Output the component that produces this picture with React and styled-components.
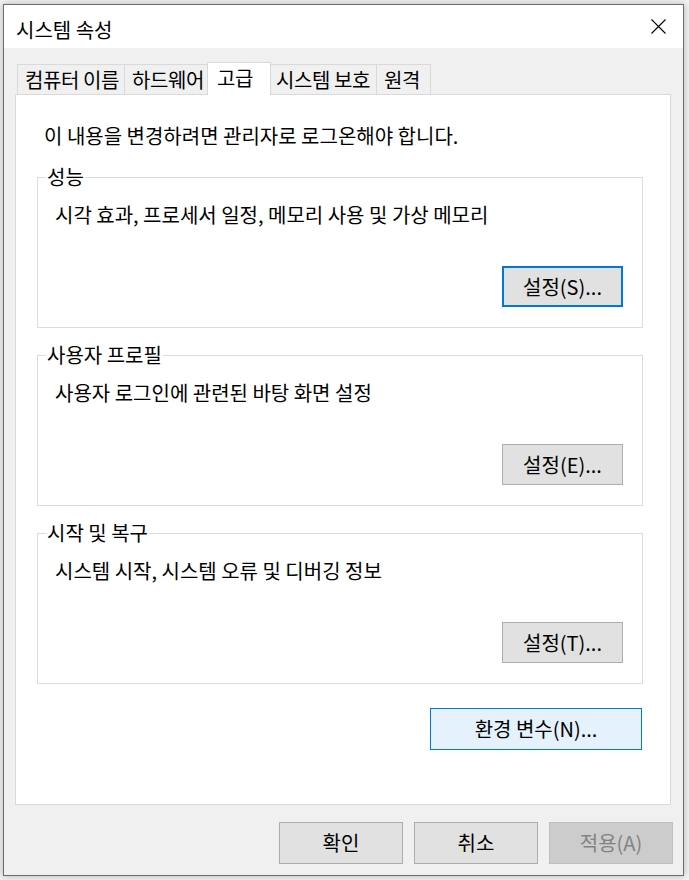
import React from "react";
import styled, { createGlobalStyle, css } from "styled-components";

const GlobalStyle = createGlobalStyle`
  html, body {
    margin: 0;
    padding: 0;
    background: #f3f3f3;
  }
  body {
    font-family: "Noto Sans CJK KR", "Noto Sans", sans-serif;
    color: #000;
  }
`;

const Page = styled.div`
  padding: 4px 0 0 3px;
  width: 689px;
  height: 880px;
  box-sizing: border-box;
  overflow: hidden;
`;

const Window = styled.div`
  width: 681px;
  height: 872px;
  box-sizing: border-box;
  border: 1px solid #6c6c6c;
  background: #f0f0f0;
  display: flex;
  flex-direction: column;
  box-shadow: 0 0 7px rgba(0, 0, 0, 0.28);
`;

const TitleBar = styled.div`
  height: 43px;
  background: #fff;
  display: flex;
  align-items: center;
  padding-left: 12px;
`;

const Title = styled.div`
  flex: 1;
  font-size: 20px;
  line-height: 24px;
  padding-top: 6px;
`;

const CloseButton = styled.div`
  width: 49px;
  height: 43px;
  display: flex;
  align-items: center;
  justify-content: center;
`;

const Body = styled.div`
  flex: 1;
  display: flex;
  flex-direction: column;
  padding: 14px 12px 0 11px;
`;

const TabRow = styled.div`
  display: flex;
  align-items: flex-end;
  height: 32px;
  padding-left: 2px;
`;

const Tab = styled.div`
  box-sizing: border-box;
  width: ${(p) => p.$w}px;
  height: ${(p) => (p.$active ? 33 : 30)}px;
  margin-left: ${(p) => p.$ml}px;
  margin-right: ${(p) => (p.$active ? -2 : 0)}px;
  margin-bottom: ${(p) => (p.$active ? -1 : 0)}px;
  border: 1px solid #d9d9d9;
  border-bottom: none;
  background: ${(p) => (p.$active ? "#fff" : "#f0f0f0")};
  position: relative;
  z-index: ${(p) => (p.$active ? 1 : 0)};
  padding-left: ${(p) => (p.$active ? 9 : 7)}px;
  padding-bottom: ${(p) => (p.$active ? 2 : 0)}px;
  display: flex;
  align-items: center;
  font-size: 20px;
  line-height: 24px;
  letter-spacing: -0.4px;
  white-space: nowrap;
`;

const Panel = styled.div`
  box-sizing: border-box;
  height: 711px;
  background: #fff;
  border: 1px solid #d9d9d9;
  padding: 0 27px 0 21px;
  display: flex;
  flex-direction: column;
`;

const Info = styled.div`
  margin: 29px 0 0 7px;
  font-size: 20px;
  line-height: 24px;
`;

const Groups = styled.div`
  display: flex;
  flex-direction: column;
  gap: 17px;
  margin-top: 19px;
`;

const Group = styled.fieldset`
  margin: 0;
  padding: 0 19px 20px 8px;
  border: 1px solid #dcdcdc;
  min-width: 0;
`;

const Legend = styled.legend`
  padding: 0 1px;
  font-size: 20px;
  line-height: 20px;
`;

const Desc = styled.div`
  margin: 16px 0 0 9px;
  font-size: 20px;
  line-height: 24px;
`;

const ButtonRow = styled.div`
  display: flex;
  justify-content: flex-end;
  margin-top: ${(p) => p.$mt}px;
  margin-right: ${(p) => p.$mr || 0}px;
`;

const Button = styled.button`
  box-sizing: border-box;
  width: ${(p) => p.$w}px;
  height: ${(p) => p.$h}px;
  padding: 0;
  font-family: inherit;
  font-size: 20px;
  line-height: 24px;
  color: #000;
  background: #e1e1e1;
  border: 1px solid #adadad;
  border-radius: 0;
  ${(p) =>
    p.$variant === "focus" &&
    css`
      border: 2px solid #0078d7;
    `}
  ${(p) =>
    p.$variant === "hover" &&
    css`
      background: #e5f1fb;
      border: 1px solid #0078d7;
    `}
  ${(p) =>
    p.$variant === "disabled" &&
    css`
      background: #cccccc;
      border: 1px solid #bfbfbf;
      color: #838383;
    `}
`;

const Footer = styled.div`
  display: flex;
  justify-content: flex-end;
  gap: 11px;
  margin: 17px -2px 0 0;
`;

const tabs = [
  { label: "컴퓨터 이름", w: 108, ml: 0 },
  { label: "하드웨어", w: 86, ml: -1 },
  { label: "고급", w: 64, ml: -3, active: true },
  { label: "시스템 보호", w: 109, ml: -1 },
  { label: "원격", w: 55, ml: -1 },
];

const groups = [
  {
    legend: "성능",
    desc: "시각 효과, 프로세서 일정, 메모리 사용 및 가상 메모리",
    button: "설정(S)...",
    variant: "focus",
  },
  {
    legend: "사용자 프로필",
    desc: "사용자 로그인에 관련된 바탕 화면 설정",
    button: "설정(E)...",
  },
  {
    legend: "시작 및 복구",
    desc: "시스템 시작, 시스템 오류 및 디버깅 정보",
    button: "설정(T)...",
  },
];

export default function App() {
  return (
    <Page>
      <GlobalStyle />
      <Window>
        <TitleBar>
          <Title>시스템 속성</Title>
          <CloseButton>
            <svg width="15" height="15" viewBox="0 0 15 15">
              <path d="M0.5 0.5 L14.5 14.5 M14.5 0.5 L0.5 14.5" stroke="#000" strokeWidth="1.1" fill="none" />
            </svg>
          </CloseButton>
        </TitleBar>
        <Body>
          <TabRow>
            {tabs.map((t) => (
              <Tab key={t.label} $w={t.w} $ml={t.ml} $active={t.active}>
                {t.label}
              </Tab>
            ))}
          </TabRow>
          <Panel>
            <Info>이 내용을 변경하려면 관리자로 로그온해야 합니다.</Info>
            <Groups>
              {groups.map((g) => (
                <Group key={g.legend}>
                  <Legend>{g.legend}</Legend>
                  <Desc>{g.desc}</Desc>
                  <ButtonRow $mt={39}>
                    <Button $w={121} $h={41} $variant={g.variant}>
                      {g.button}
                    </Button>
                  </ButtonRow>
                </Group>
              ))}
            </Groups>
            <ButtonRow $mt={24} $mr={1}>
              <Button $w={212} $h={42} $variant="hover">
                환경 변수(N)...
              </Button>
            </ButtonRow>
          </Panel>
          <Footer>
            <Button $w={124} $h={42}>확인</Button>
            <Button $w={124} $h={42}>취소</Button>
            <Button $w={124} $h={42} $variant="disabled">적용(A)</Button>
          </Footer>
        </Body>
      </Window>
    </Page>
  );
}
